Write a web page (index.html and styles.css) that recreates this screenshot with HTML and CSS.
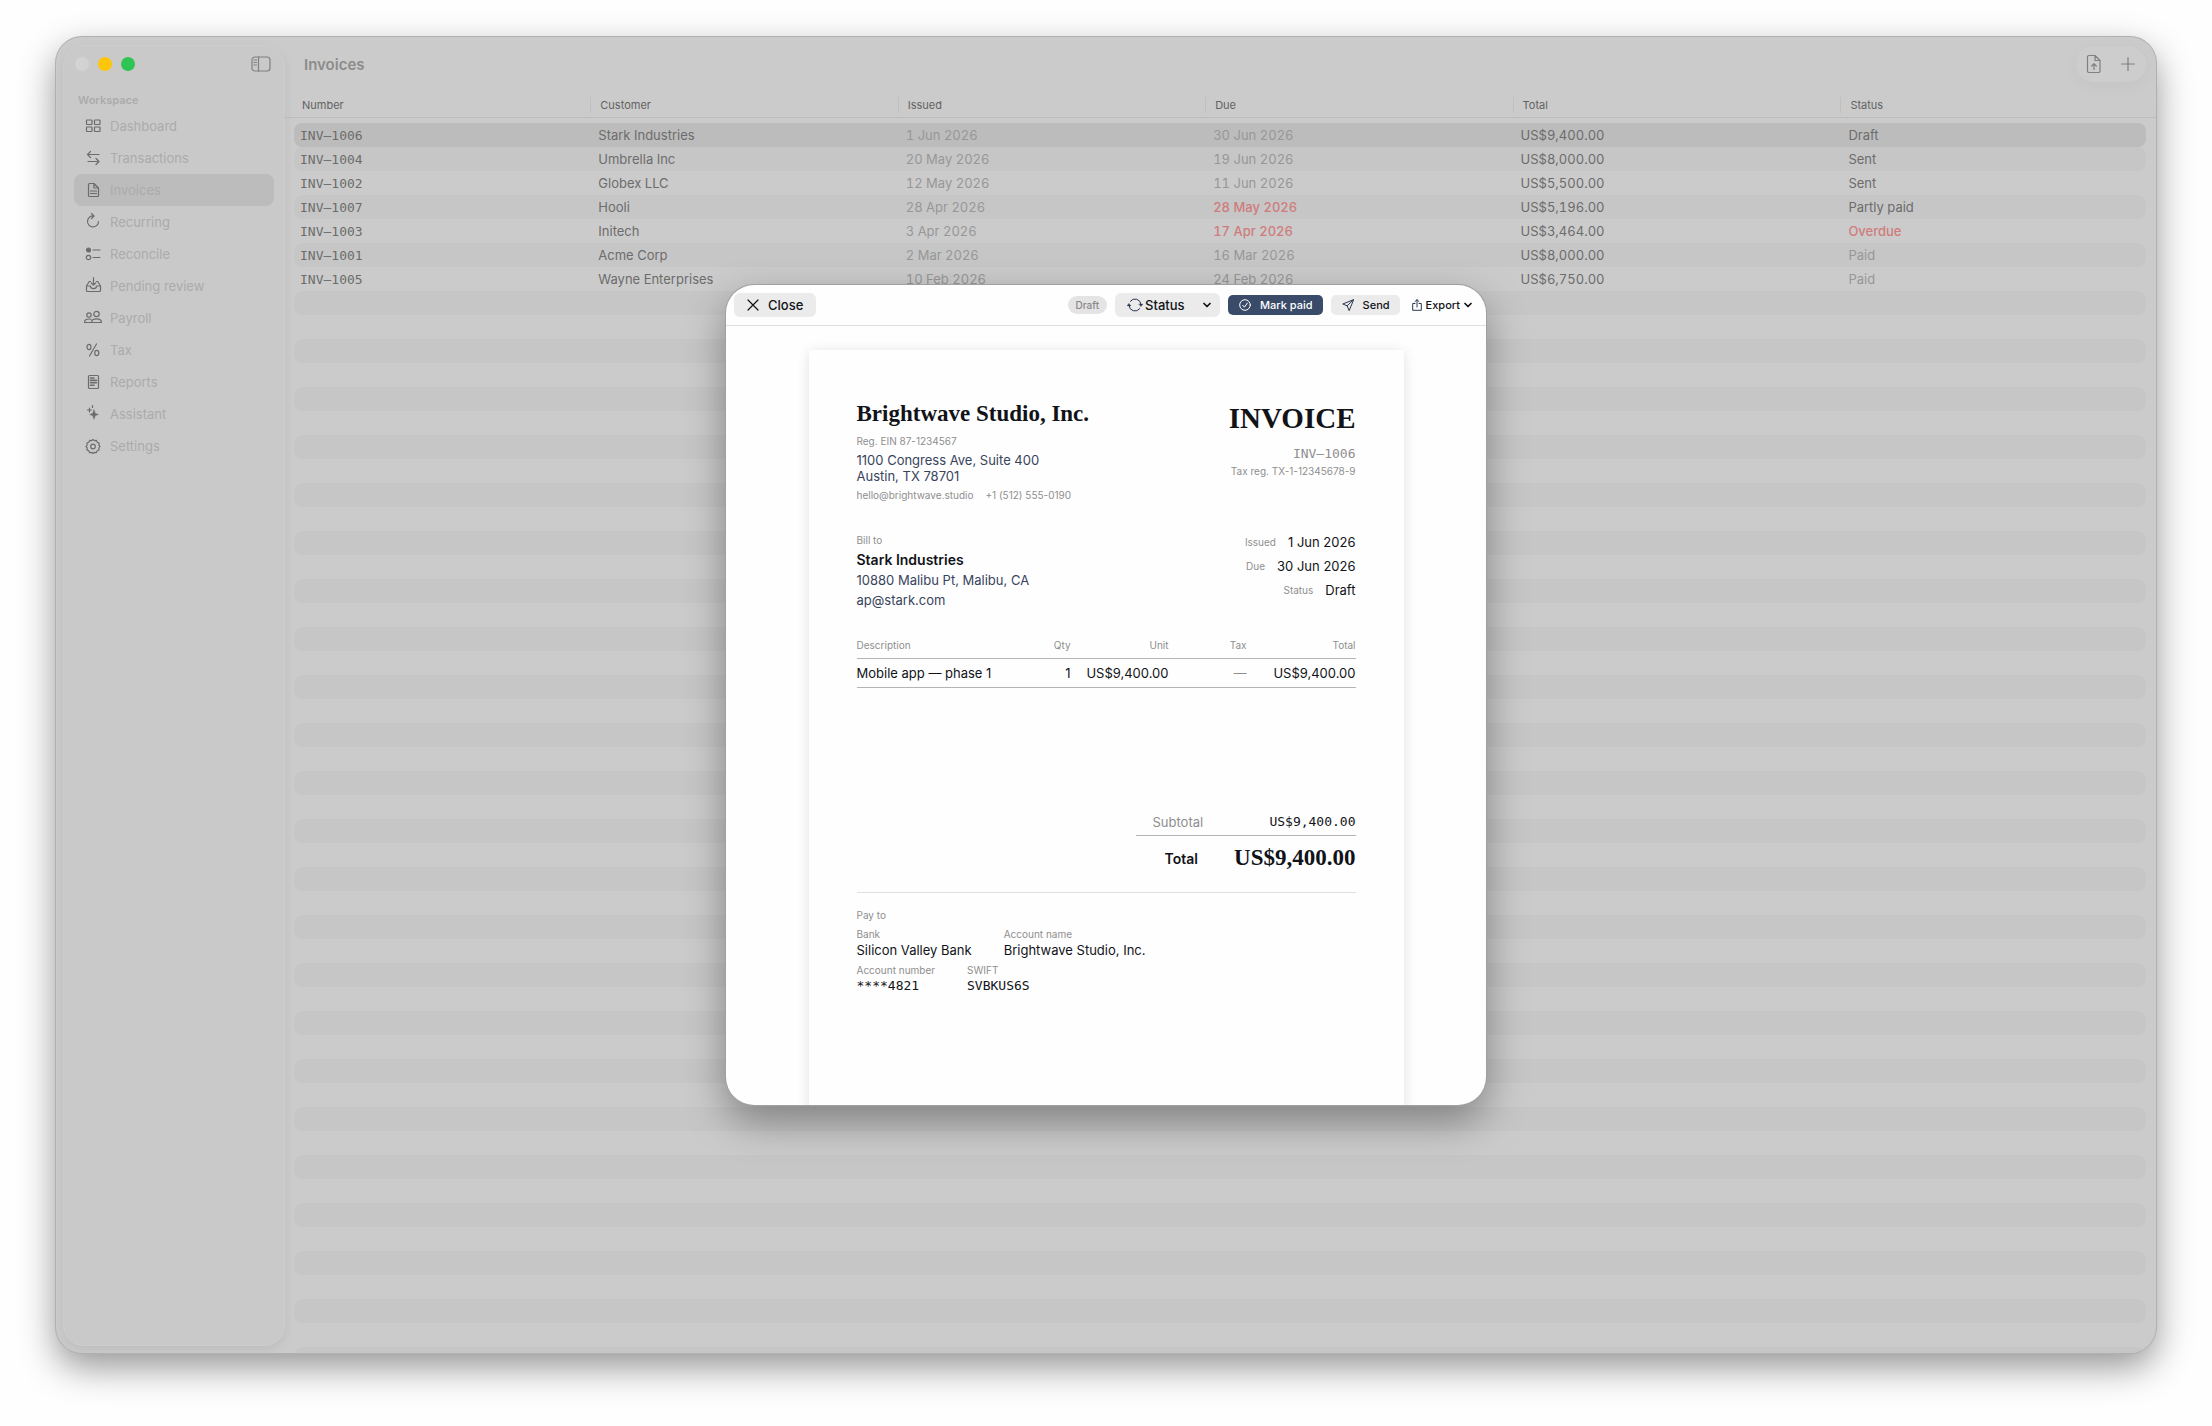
FILE: index.html
```html
<!DOCTYPE html>
<html lang="en">
<head>
    <meta charset="UTF-8">
    <meta name="viewport" content="width=device-width, initial-scale=1.0">
    <title>Invoices</title>
    <link rel="stylesheet" href="styles.css">
</head>
<body>
    <div class="window">
        <aside class="sidebar">
            <div class="sidebar-head">
                <button class="light light-close" aria-label="Close window"></button>
                <button class="light light-min" aria-label="Minimize window"></button>
                <button class="light light-max" aria-label="Zoom window"></button>
                <button class="icon-button toggle" aria-label="Toggle sidebar">
                    <svg width="20" height="16" viewBox="0 0 20 16"><rect x="1" y="1" width="18" height="14" rx="3"/><path d="M7.500 1v14M3 4h2.500M3 6.500h2.500M3 9h2.500"/></svg>
                </button>
            </div>
            <h2 class="sidebar-label">Workspace</h2>
            <nav class="nav">
                <a href="#dashboard">
                    <svg viewBox="0 0 20 20"><rect x="3.500" y="4" width="5.500" height="4.500" rx="0.500"/><rect x="11.500" y="4" width="5.500" height="4.500" rx="0.500"/><rect x="3.500" y="11" width="5.500" height="4.500" rx="0.500"/><rect x="11.500" y="11" width="5.500" height="4.500" rx="0.500"/></svg>
                    Dashboard
                </a>
                <a href="#transactions">
                    <svg viewBox="0 0 20 20"><path d="M16 6.500H4.500M7.500 3.500l-3 3 3 3M5 13.500h11M13 10.500l3 3-3 3"/></svg>
                    Transactions
                </a>
                <a href="#invoices" class="active">
                    <svg viewBox="0 0 20 20"><path d="M6.500 3.500h4.500l4.500 4.500v7.500a1 1 0 0 1-1 1h-8a1 1 0 0 1-1-1v-11a1 1 0 0 1 1-1zM11 3.500v4.500h4.500M7.500 11h6M7.500 13.500h6"/></svg>
                    Invoices
                </a>
                <a href="#recurring">
                    <svg viewBox="0 0 20 20"><path d="M10.500 4A5.500 5.500 0 1 0 15.500 9.500M8.500 1.500l2.500 2.500-2.500 2.700"/></svg>
                    Recurring
                </a>
                <a href="#reconcile">
                    <svg viewBox="0 0 20 20"><circle class="fill" cx="5.500" cy="6" r="2"/><circle cx="5.500" cy="13.500" r="2.200"/><path d="M10 6h7M10 13.500h7"/></svg>
                    Reconcile
                </a>
                <a href="#pending">
                    <svg viewBox="0 0 20 20"><path d="M7.500 5.500H6.200L3.500 10v4.500a1 1 0 0 0 1 1h12a1 1 0 0 0 1-1V10l-2.700-4.500h-1.300M3.500 10h4c0 3.500 6 3.500 6 0h4M10.500 1.500v7.500M8.300 7l2.200 2.200L12.700 7"/></svg>
                    Pending review
                </a>
                <a href="#payroll">
                    <svg viewBox="0 0 20 20"><circle cx="6" cy="7" r="2.200"/><circle cx="13.500" cy="6" r="2.700"/><path d="M7.500 14.500H1.500c0-2 1.500-3.500 4.500-3.500 1 0 1.500.1 2 .3M8.500 14.500c0-2.300 2-3.700 5-3.700s5 1.400 5 3.700z"/></svg>
                    Payroll
                </a>
                <a href="#tax">
                    <svg viewBox="0 0 20 20"><ellipse cx="6" cy="7" rx="2" ry="2.600"/><ellipse cx="13.800" cy="13" rx="2" ry="2.600"/><path d="M13.500 4l-7 12"/></svg>
                    Tax
                </a>
                <a href="#reports">
                    <svg viewBox="0 0 20 20"><rect x="5.500" y="3.500" width="10" height="13" rx="1"/><path class="bold" d="M7.500 6h3.500M7.500 8.400h6M7.500 10.800h6M7.500 13.200h3.500"/></svg>
                    Reports
                </a>
                <a href="#assistant">
                    <svg viewBox="0 0 20 20"><path class="fill thin" d="M11 5.500l1.300 3.700 3.200 1.300-3.200 1.300L11 15.500l-1.300-3.700-3.200-1.300 3.200-1.300z"/><path d="M6.500 4v4M4.500 6h4M9.500 1.500v2"/></svg>
                    Assistant
                </a>
                <a href="#settings">
                    <svg viewBox="0 0 20 20"><path d="M10 3.400l1.500 1.300 2-.3.700 1.900 1.900.8-.3 2 1.200 1.400-1.200 1.500.3 2-1.900.7-.8 1.900-2-.3-1.400 1.200-1.500-1.200-2 .3-.7-1.900-1.900-.8.3-2L3 10.500l1.200-1.500-.3-2 1.900-.7.800-1.900 2 .3z"/><circle cx="10" cy="10.500" r="2.300"/></svg>
                    Settings
                </a>
            </nav>
        </aside>

        <main class="content">
            <header class="titlebar">
                <h1>Invoices</h1>
                <div class="actions">
                    <button class="icon-button" aria-label="Import invoice">
                        <svg width="16" height="20" viewBox="0 0 16 20"><path d="M3 1.500h6l5 5V17a1.500 1.500 0 0 1-1.500 1.500H3A1.500 1.500 0 0 1 1.500 17V3A1.500 1.500 0 0 1 3 1.500zM9 1.500v5h5M8 15.500V10M5.700 12L8 9.700l2.300 2.300"/></svg>
                    </button>
                    <button class="icon-button" aria-label="New invoice">
                        <svg width="16" height="16" viewBox="0 0 16 16"><path d="M8 1.500v13M1.500 8h13"/></svg>
                    </button>
                </div>
            </header>

            <div class="list">
                <table class="invoices">
                    <thead>
                        <tr>
                            <th class="col-number">Number</th>
                            <th class="col-wide">Customer</th>
                            <th class="col-wide">Issued</th>
                            <th class="col-wide">Due</th>
                            <th class="col-total">Total</th>
                            <th>Status</th>
                        </tr>
                    </thead>
                    <tbody id="rows">
                        <tr class="selected"><td class="mono">INV–1006</td><td>Stark Industries</td><td class="dim">1 Jun 2026</td><td class="dim">30 Jun 2026</td><td>US$9,400.00</td><td>Draft</td></tr>
                        <tr><td class="mono">INV–1004</td><td>Umbrella Inc</td><td class="dim">20 May 2026</td><td class="dim">19 Jun 2026</td><td>US$8,000.00</td><td>Sent</td></tr>
                        <tr><td class="mono">INV–1002</td><td>Globex LLC</td><td class="dim">12 May 2026</td><td class="dim">11 Jun 2026</td><td>US$5,500.00</td><td>Sent</td></tr>
                        <tr><td class="mono">INV–1007</td><td>Hooli</td><td class="dim">28 Apr 2026</td><td class="late">28 May 2026</td><td>US$5,196.00</td><td>Partly paid</td></tr>
                        <tr><td class="mono">INV–1003</td><td>Initech</td><td class="dim">3 Apr 2026</td><td class="late">17 Apr 2026</td><td>US$3,464.00</td><td class="late">Overdue</td></tr>
                        <tr><td class="mono">INV–1001</td><td>Acme Corp</td><td class="dim">2 Mar 2026</td><td class="dim">16 Mar 2026</td><td>US$8,000.00</td><td class="dim">Paid</td></tr>
                        <tr><td class="mono">INV–1005</td><td>Wayne Enterprises</td><td class="dim">10 Feb 2026</td><td class="dim">24 Feb 2026</td><td>US$6,750.00</td><td class="dim">Paid</td></tr>
                    </tbody>
                </table>
            </div>
        </main>

        <div class="overlay">
            <section class="sheet" role="dialog" aria-label="Invoice INV-1006">
                <div class="sheet-bar">
                    <button class="btn btn-large btn-close">
                        <svg width="12" height="12" viewBox="0 0 12 12"><path d="M1 1l10 10M11 1L1 11"/></svg>
                        Close
                    </button>
                    <span class="badge">Draft</span>
                    <label class="btn btn-large picker">
                        <svg width="16" height="16" viewBox="0 0 16 16"><path d="M3.300 4.300A6 6 0 0 1 14 7.500M12.700 11.700A6 6 0 0 1 2 8.500"/><path class="fill thin" d="M12 7h4l-2 2.600zM0 9h4L2 6.400z"/></svg>
                        <select aria-label="Status">
                            <option>Status</option>
                            <option>Draft</option>
                            <option>Sent</option>
                            <option>Paid</option>
                        </select>
                        <svg class="chevron" width="8" height="6" viewBox="0 0 8 6"><path d="M1 1.500l3 3 3-3"/></svg>
                    </label>
                    <button class="btn btn-primary">
                        <svg width="12" height="12" viewBox="0 0 12 12"><circle cx="6" cy="6" r="5.300"/><path d="M3.700 6.300l1.700 1.900 3-4.200"/></svg>
                        Mark paid
                    </button>
                    <button class="btn">
                        <svg width="12" height="12" viewBox="0 0 12 12"><path d="M11.300.8L.8 5l4.400 1.800L7 11.300zM11.300.8L5.200 6.800"/></svg>
                        Send
                    </button>
                    <button class="btn btn-plain" aria-haspopup="menu">
                        <svg width="10" height="12" viewBox="0 0 10 12"><path d="M3 4.500H.7v6.800h8.600V4.500H7M5 8V.8M3 2.600L5 .7l2 1.900"/></svg>
                        Export
                        <svg class="chevron" width="8" height="6" viewBox="0 0 8 6"><path d="M1 1.500l3 3 3-3"/></svg>
                    </button>
                </div>

                <div class="sheet-body">
                    <article class="paper">
                        <header class="split">
                            <div>
                                <h2 class="company">Brightwave Studio, Inc.</h2>
                                <p class="small">Reg. EIN 87-1234567</p>
                                <p class="address">1100 Congress Ave, Suite 400<br>Austin, TX 78701</p>
                                <p class="small contact"><span>hello@brightwave.studio</span><span>+1 (512) 555-0190</span></p>
                            </div>
                            <div class="right">
                                <h2 class="doc-title">INVOICE</h2>
                                <p class="mono doc-number">INV–1006</p>
                                <p class="small">Tax reg. TX-1-12345678-9</p>
                            </div>
                        </header>

                        <section class="split parties">
                            <div class="bill">
                                <h3 class="small">Bill to</h3>
                                <p class="client">Stark Industries</p>
                                <p>10880 Malibu Pt, Malibu, CA</p>
                                <p>ap@stark.com</p>
                            </div>
                            <dl class="meta">
                                <div><dt class="small">Issued</dt><dd>1 Jun 2026</dd></div>
                                <div><dt class="small">Due</dt><dd>30 Jun 2026</dd></div>
                                <div><dt class="small">Status</dt><dd>Draft</dd></div>
                            </dl>
                        </section>

                        <table class="items">
                            <thead>
                                <tr><th>Description</th><th>Qty</th><th class="unit">Unit</th><th class="tax">Tax</th><th class="sum">Total</th></tr>
                            </thead>
                            <tbody>
                                <tr><td>Mobile app — phase 1</td><td>1</td><td>US$9,400.00</td><td class="none">—</td><td>US$9,400.00</td></tr>
                            </tbody>
                        </table>

                        <dl class="totals">
                            <div class="subtotal"><dt>Subtotal</dt><dd class="mono">US$9,400.00</dd></div>
                            <div class="grand"><dt>Total</dt><dd>US$9,400.00</dd></div>
                        </dl>

                        <section class="pay">
                            <h3 class="small">Pay to</h3>
                            <dl class="pay-row">
                                <div><dt class="small">Bank</dt><dd>Silicon Valley Bank</dd></div>
                                <div><dt class="small">Account name</dt><dd>Brightwave Studio, Inc.</dd></div>
                            </dl>
                            <dl class="pay-row">
                                <div><dt class="small">Account number</dt><dd class="mono">****4821</dd></div>
                                <div><dt class="small">SWIFT</dt><dd class="mono">SVBKUS6S</dd></div>
                            </dl>
                        </section>
                    </article>
                </div>
            </section>
        </div>
    </div>

    <script>
        // fill the rest of the list with empty striped rows
        const rows = document.getElementById('rows');
        const list = document.querySelector('.list');
        const rowHeight = rows.rows[0].offsetHeight;
        const missing = Math.ceil((list.clientHeight - rows.parentElement.offsetHeight) / rowHeight);

        for (let i = 0; i < missing; i++) {
            const row = rows.insertRow();
            for (let c = 0; c < 6; c++) {
                row.insertCell();
            }
        }
    </script>
</body>
</html>
```
FILE: styles.css
```css
* {
    box-sizing: border-box;
}

body {
    margin: 0;
    height: 100vh;
    padding: 37px 56px 73px;
    background: #fefefe;
    font-family: Inter, "Liberation Sans", sans-serif;
    font-size: 13px;
    color: #6c6c6c;
}

h1, h2, h3, p, dl, dd {
    margin: 0;
    font-weight: 400;
}

button, select {
    font: inherit;
    color: inherit;
    border: none;
    padding: 0;
    background: none;
}

svg {
    flex: none;
    fill: none;
    stroke: currentColor;
    stroke-width: 1.2;
    stroke-linecap: round;
    stroke-linejoin: round;
}

svg .fill {
    fill: currentColor;
}

svg .thin {
    stroke-width: 0.3;
}

svg .bold {
    stroke-width: 1.6;
}

.mono {
    font-family: "DejaVu Sans Mono", "Liberation Mono", monospace;
}

.window {
    position: relative;
    display: flex;
    height: 100%;
    background: #cbcbcb;
    border-radius: 26px;
    box-shadow: 0 0 0 1px #b0b0b0, 0 14px 36px rgba(0, 0, 0, 0.42);
    overflow: hidden;
}

/* Sidebar */

.sidebar {
    flex: none;
    width: 220px;
    margin: 9px 0 8px 8px;
    padding: 0 10px;
    background: #c9c9c9;
    border-radius: 20px;
    box-shadow: 0 0 0 1px #cdcdcd, 0 4px 12px rgba(0, 0, 0, 0.08);
}

.sidebar-head {
    display: flex;
    align-items: center;
    gap: 9px;
    height: 36px;
    padding: 0 3px 0 1px;
}

.light {
    width: 14px;
    height: 14px;
    border-radius: 50%;
}

.light-close {
    background: #d3d3d3;
}

.light-min {
    background: #fdc60b;
}

.light-max {
    background: #2fc553;
}

.icon-button {
    display: flex;
    color: #808080;
}

.toggle {
    margin-left: auto;
}

.sidebar-label {
    margin: 10px 0 2px 4px;
    font-size: 11px;
    font-weight: 600;
    line-height: 16px;
    color: #ababab;
}

.nav a {
    display: flex;
    align-items: center;
    gap: 7px;
    height: 32px;
    padding-left: 9px;
    border-radius: 8px;
    color: #ababab;
    text-decoration: none;
}

.nav svg {
    width: 20px;
    height: 20px;
    color: #6c6c6c;
}

.nav .active {
    background: #bcbcbc;
}

/* Invoice list */

.content {
    flex: 1;
    display: flex;
    flex-direction: column;
    min-width: 0;
}

.titlebar {
    display: flex;
    align-items: center;
    justify-content: space-between;
    height: 54px;
    padding: 0 10px 0 20px;
}

.titlebar h1 {
    font-size: 15px;
    font-weight: 600;
    color: #8c8c8c;
}

.actions {
    display: flex;
    align-items: center;
    justify-content: space-between;
    width: 70px;
    height: 36px;
    padding: 0 10px;
    border-radius: 18px;
    background: #cdcdcd;
    box-shadow: 0 4px 20px rgba(0, 0, 0, 0.03);
}

.list {
    flex: 1;
    min-height: 0;
    padding: 0 10px;
    overflow: hidden;
}

.invoices {
    position: relative;
    width: 100%;
    table-layout: fixed;
    border-spacing: 0;
    font-variant-numeric: tabular-nums;
}

/* header rule runs past the rows to the window edges */
.invoices::after {
    content: "";
    position: absolute;
    top: 26px;
    left: -10px;
    right: -10px;
    height: 1px;
    background: #bcbcbc;
}

.invoices th {
    height: 27px;
    padding: 0 0 0 8px;
    text-align: left;
    font-size: 11px;
    font-weight: 400;
    color: #626262;
}

.invoices th + th {
    padding-left: 10px;
    background: linear-gradient(#bfbfbf, #bfbfbf) left center / 1px 16px no-repeat;
}

.col-number {
    width: 16%;
}

.col-wide {
    width: 16.6%;
}

.col-total {
    width: 17.7%;
}

.invoices tbody::before {
    content: "";
    display: block;
    height: 5px;
}

.invoices td {
    height: 24px;
    padding: 0 0 0 8px;
}

.invoices td.mono {
    padding-left: 6px;
}

.invoices tr:nth-child(even) td {
    background: #c6c6c6;
}

.invoices .selected td {
    background: #bcbcbc;
}

.invoices td:first-child {
    border-radius: 8px 0 0 8px;
}

.invoices td:last-child {
    border-radius: 0 8px 8px 0;
}

.dim {
    color: #979797;
}

.late {
    color: #cf7c7c;
    font-weight: 500;
}

/* Invoice sheet */

.overlay {
    position: absolute;
    inset: 0;
    display: flex;
    align-items: center;
    justify-content: center;
}

.sheet {
    display: flex;
    flex-direction: column;
    width: 760px;
    max-width: 90%;
    height: 820px;
    max-height: 90%;
    background: #fefefe;
    border-radius: 28px;
    box-shadow: 0 0 0 1px #a0a0a0, 0 16px 40px rgba(0, 0, 0, 0.36);
    color: #111318;
    overflow: hidden;
}

.sheet-bar {
    display: flex;
    align-items: center;
    gap: 8px;
    height: 41px;
    padding: 0 14px 0 8px;
    border-bottom: 1px solid #dedede;
}

.btn {
    display: flex;
    align-items: center;
    gap: 9px;
    height: 20px;
    padding: 0 10px 0 11px;
    border-radius: 5px;
    background: #ebebeb;
    font-size: 11px;
    font-weight: 500;
}

.btn svg {
    color: #2c3850;
    stroke-width: 1;
}

.btn-large {
    height: 24px;
    border-radius: 6px;
    font-size: 13px;
}

.btn-close {
    margin-right: auto;
    padding: 0 13px;
}

.btn-close svg {
    color: #111318;
    stroke-width: 1.2;
}

.badge {
    padding: 0 8px;
    border-radius: 10px;
    background: #e4e4e4;
    font-size: 10px;
    font-weight: 500;
    line-height: 18px;
    color: #888888;
}

.picker {
    gap: 2px;
    width: 105px;
    padding: 0 9px 0 12px;
}

.picker select {
    flex: 1;
    min-width: 0;
    appearance: none;
}

.btn .chevron {
    color: #111318;
    stroke-width: 1.7;
}

.btn-primary {
    background: #3a4a69;
    color: #fefefe;
}

.btn-primary svg {
    color: #fefefe;
}

.btn-plain {
    gap: 4px;
    padding: 0 0 0 4px;
    background: none;
}

.sheet-body {
    flex: 1;
    min-height: 0;
    padding-top: 24px;
    overflow: hidden;
}

.paper {
    width: 595px;
    max-width: 100%;
    min-height: 842px;
    margin: 0 auto;
    padding: 48px;
    background: #fefefe;
    box-shadow: 0 2px 12px rgba(0, 0, 0, 0.12);
}

.split {
    display: flex;
    justify-content: space-between;
}

.right {
    text-align: right;
}

.company, .doc-title, .grand dd {
    font-family: "Liberation Serif", serif;
    font-weight: 700;
}

.company {
    margin-bottom: 4px;
    font-size: 23px;
    line-height: 32px;
}

.small {
    font-size: 10px;
    line-height: 14px;
    color: #8e8e8e;
}

.address {
    margin: 4px 0;
    line-height: 16px;
    color: #38445c;
}

.contact {
    display: flex;
    gap: 12px;
}

.doc-title {
    margin-bottom: 8px;
    font-size: 29px;
    line-height: 40px;
}

.doc-number {
    margin-bottom: 2px;
    line-height: 16px;
    color: #8e8e8e;
}

.parties {
    margin-top: 28px;
}

.bill h3 {
    line-height: 20px;
}

.bill p {
    line-height: 20px;
    color: #38445c;
}

.bill .client {
    font-size: 14px;
    font-weight: 600;
    color: #111318;
}

.meta div {
    display: flex;
    align-items: center;
    justify-content: flex-end;
    gap: 12px;
    height: 24px;
}

.items {
    width: 100%;
    margin-top: 26px;
    border-spacing: 0;
}

.items th, .items td {
    padding: 0;
    border-bottom: 1px solid #b4b4b4;
    text-align: right;
}

.items th {
    padding-bottom: 4px;
    font-size: 10px;
    font-weight: 400;
    line-height: 18px;
    color: #8e8e8e;
}

.items td {
    height: 29px;
}

.items th:first-child, .items td:first-child {
    text-align: left;
}

.items .unit {
    width: 98px;
}

.items .tax {
    width: 78px;
}

.items .sum {
    width: 109px;
}

.items .none {
    color: #8e8e8e;
}

.totals {
    width: 220px;
    margin: 120px 0 0 auto;
}

.totals div {
    display: flex;
    align-items: center;
    justify-content: space-between;
}

.subtotal {
    height: 28px;
    padding-left: 17px;
    border-bottom: 1px solid #b4b4b4;
}

.subtotal dt {
    color: #8e8e8e;
}

.grand {
    height: 44px;
    padding-left: 29px;
}

.grand dt {
    font-size: 14px;
    font-weight: 600;
}

.grand dd {
    font-size: 23px;
}

.pay {
    margin-top: 12px;
    padding-top: 14px;
    border-top: 1px solid #e0e0e0;
}

.pay h3 {
    line-height: 16px;
}

.pay-row {
    display: flex;
    gap: 32px;
    margin-top: 4px;
    line-height: 18px;
}
```
